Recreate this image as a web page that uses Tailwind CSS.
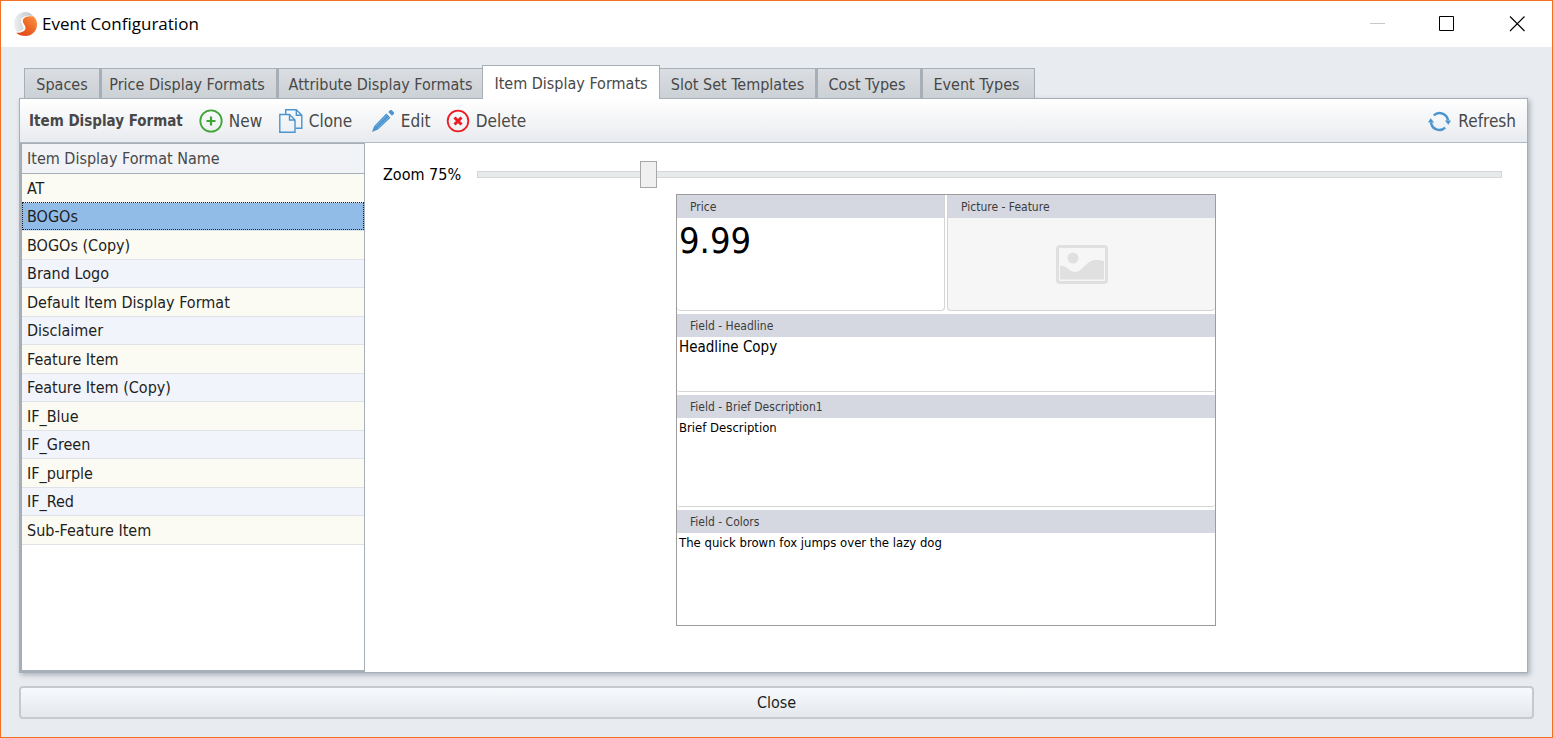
<!DOCTYPE html>
<html lang="en">
<head>
<meta charset="utf-8">
<title>Event Configuration</title>
<script src="https://cdn.jsdelivr.net/npm/@tailwindcss/browser@4"></script>
</head>
<body class="font-['DejaVu_Sans_Condensed','DejaVu_Sans',sans-serif] text-[16px] leading-5 text-[#1e1e1e]">
<div class="flex min-h-screen flex-col border border-[#f37021] bg-[#e8ebf0]">
  <header class="flex h-[46px] items-center bg-white pl-[12px]">
    <svg class="size-6" viewBox="0 0 24 24" aria-hidden="true">
      <defs>
        <linearGradient id="lg" x1="0" y1="0" x2="1" y2="0"><stop offset="0" stop-color="#eef0f1"/><stop offset="1" stop-color="#bfc3c6"/></linearGradient>
        <linearGradient id="lo" x1="0" y1="1" x2="1" y2="0"><stop offset="0" stop-color="#d9431e"/><stop offset=".5" stop-color="#ee6323"/><stop offset="1" stop-color="#fa9a4a"/></linearGradient>
      </defs>
      <path fill="url(#lg)" d="M12.500 0C6 0 1 5 1 11.500c0 3.500 1.300 6.500 3.200 8.500 3-.3 6.300-1.500 6.300-4 0-2.500-2.500-4-2.500-7 0-4 5-6 12-5C18 1.500 15.500 0 12.500 0z"/>
      <path fill="url(#lo)" d="M20.800 4.500c-5-.8-11 .5-11 4.300 0 3 2.700 4.200 2.700 7.200 0 3.300-4.300 5-9.300 4.700C5.500 22.800 8.800 24 12.500 24 19 24 24 18.800 24 12.200c0-2.900-1.200-5.700-3.200-7.700z"/>
    </svg>
    <h1 class="ml-[5px] font-['Open_Sans','Noto_Sans',sans-serif] text-[17px] leading-6 text-black">Event Configuration</h1>
    <div class="ml-auto flex h-full items-center">
      <button aria-label="Minimize" class="flex h-full w-[70px] items-center justify-center"><svg class="size-4" viewBox="0 0 16 16"><path d="M1 7.500h15" stroke="#c8c8c8"/></svg></button>
      <button aria-label="Maximize" class="flex h-full w-[70px] items-center justify-center"><svg class="size-4" viewBox="0 0 16 16"><path d="M.5.500h14v14h-14z" fill="none" stroke="#000"/></svg></button>
      <button aria-label="Close window" class="flex h-full w-[70px] items-center justify-center"><svg class="size-4" viewBox="0 0 16 16"><path d="M1 .500l14.500 14.500M15.500.500l-14.500 14.500" stroke="#000" stroke-width="1.100"/></svg></button>
    </div>
  </header>

  <main class="flex flex-1 flex-col px-[18px] pt-[18px] pb-[18px]">
    <nav role="tablist" class="relative z-10 -mb-px flex items-end pl-[5px] pr-1 text-[#484848] [&>button]:pt-[2px]">
      <button role="tab" class="h-[31px] w-[76px] border border-[#a6aeb7] bg-linear-to-b from-[#dadde1] to-[#ccd1d6]">Spaces</button>
      <button role="tab" class="h-[31px] w-[177px] border border-l-2 border-[#a6aeb7] bg-linear-to-b from-[#dadde1] to-[#ccd1d6] pr-1 whitespace-nowrap">Price Display Formats</button>
      <button role="tab" class="h-[31px] w-[205px] border border-l-2 border-r-0 border-[#a6aeb7] bg-linear-to-b from-[#dadde1] to-[#ccd1d6] whitespace-nowrap">Attribute Display Formats</button>
      <button role="tab" aria-selected="true" class="h-[34px] w-[178px] border border-b-0 border-[#a6aeb7] bg-white whitespace-nowrap">Item Display Formats</button>
      <button role="tab" class="h-[31px] w-[156px] border border-l-0 border-[#a6aeb7] bg-linear-to-b from-[#dadde1] to-[#ccd1d6] whitespace-nowrap">Slot Set Templates</button>
      <button role="tab" class="h-[31px] w-[105px] border border-l-2 border-[#a6aeb7] bg-linear-to-b from-[#dadde1] to-[#ccd1d6] pr-1 whitespace-nowrap">Cost Types</button>
      <button role="tab" class="h-[31px] w-[114px] border border-l-2 border-[#a6aeb7] bg-linear-to-b from-[#dadde1] to-[#ccd1d6] pr-1 whitespace-nowrap">Event Types</button>
    </nav>

    <section class="mr-[6px] flex flex-1 flex-col border border-[#a6aeb7] bg-white shadow-[2px_2px_5px_#a9b0ba]">
      <div class="flex h-[44px] items-center border-b border-[#b4bac2] bg-linear-to-b from-white to-[#e8ebef] pr-[11px] pl-[9px] text-[17px] text-[#484848]">
        <h2 class="mr-4 text-[15px] font-bold">Item Display Format</h2>
        <button class="mr-[14px] flex min-w-[66px] items-center gap-[6px]">
          <svg class="size-6" viewBox="0 0 24 24" fill="none" stroke="#3fa535"><circle cx="12" cy="12" r="10.700" stroke-width="1.800"/><path d="M12 7.500v9M7.500 12h9" stroke-width="2.200"/></svg>New</button>
        <button class="mr-[14px] flex min-w-[78px] items-center gap-[6px]">
          <svg class="size-6" viewBox="0 0 24 24" fill="none" stroke="#4a94cf" stroke-width="1.400"><path d="M6.700 5.500V.8h10.600l5.500 5.500v13H16.500M17.300.8v5.500h5.500"/><path d="M.8 5.500h9.700l5.500 5.500v12.200H.8zM10.500 5.500V11H16"/></svg>Clone</button>
        <button class="mr-[14px] flex min-w-[61px] items-center gap-[6px]">
          <svg class="size-6" viewBox="0 0 24 24"><path fill="#4a94cf" d="M15.300 4.500l4.200 4.200L7 20.500 1 23l2.200-6zM17.300 3l1.700-1.700c.6-.5 1.200-.5 1.800 0l2 2c.5.600.5 1.100 0 1.700l-1.800 1.800z"/><path d="M4.500 17.500L15.800 6.300M6.300 19.500L18 8" stroke="#8fbfe6" stroke-width=".7"/></svg>Edit</button>
        <button class="flex items-center gap-[6px]">
          <svg class="size-6" viewBox="0 0 24 24" fill="none" stroke="#ec1c24"><circle cx="12" cy="12" r="10.300" stroke-width="1.800"/><path d="M8.500 8.500l7 7M15.500 8.500l-7 7" stroke-width="3"/></svg>Delete</button>
        <button class="ml-auto flex items-center gap-[6px]">
          <svg class="size-6" viewBox="0 0 24 24" fill="none" stroke="#4a94cf" stroke-width="2.400"><path d="M5.800 6.300A8.500 8.500 0 0 1 20 11.500M17.200 18.700A8.500 8.500 0 0 1 3 13.500" /><path d="M16.800 11.500h6.200l-2.600 4.200zM0 13.500h6.200l-3.600-4.200z" fill="#4a94cf" stroke="none"/></svg>Refresh</button>
      </div>

      <div class="flex flex-1">
        <div class="w-[345px] shrink-0 border-t border-r border-b-2 border-l-2 border-[#a6aeb7]">
          <table class="w-full border-collapse text-left [&_td]:pt-[2px] [&_th]:pt-[2px]">
            <thead><tr class="h-[29px] border-b border-[#a6aeb7] bg-[#f1f3f7]"><th scope="col" class="pl-[5px] font-normal text-[#484848]">Item Display Format Name</th></tr></thead>
            <tbody class="[&>tr]:border-b [&>tr]:border-[#dfe2e6] [&>tr]:odd:h-[29px] [&>tr]:odd:bg-[#fbfbf3] [&>tr]:even:h-[28px] [&>tr]:even:bg-[#f1f4fa] [&_td]:pl-[5px]">
              <tr><td>AT</td></tr>
              <tr aria-selected="true"><td class="bg-[#91bce8] outline-1 -outline-offset-1 outline-dotted outline-[#222]">BOGOs</td></tr>
              <tr><td>BOGOs (Copy)</td></tr>
              <tr><td>Brand Logo</td></tr>
              <tr><td>Default Item Display Format</td></tr>
              <tr><td>Disclaimer</td></tr>
              <tr><td>Feature Item</td></tr>
              <tr><td>Feature Item (Copy)</td></tr>
              <tr><td>IF_Blue</td></tr>
              <tr><td>IF_Green</td></tr>
              <tr><td>IF_purple</td></tr>
              <tr><td>IF_Red</td></tr>
              <tr><td>Sub-Feature Item</td></tr>
            </tbody>
          </table>
        </div>

        <div class="flex-1 pt-[18px] pr-[25px] pl-[18px]">
          <div class="flex h-[27px] items-center text-black">
            <label for="zoom" class="w-[94px] shrink-0">Zoom 75%</label>
            <input id="zoom" type="range" min="50" max="205" value="75" class="h-[27px] min-w-0 flex-1 appearance-none bg-transparent [&::-webkit-slider-runnable-track]:h-[7px] [&::-webkit-slider-runnable-track]:border [&::-webkit-slider-runnable-track]:border-[#d6d8d8] [&::-webkit-slider-runnable-track]:bg-[#e7eaea] [&::-webkit-slider-thumb]:-mt-[11px] [&::-webkit-slider-thumb]:h-[27px] [&::-webkit-slider-thumb]:w-[17px] [&::-webkit-slider-thumb]:appearance-none [&::-webkit-slider-thumb]:border [&::-webkit-slider-thumb]:border-[#a8a8a8] [&::-webkit-slider-thumb]:bg-[#f0f0f0]">
          </div>

          <div class="-mr-[7px] mt-[6px] flex justify-center">
            <div class="flex w-[540px] flex-col gap-[3px] border border-[#9c9c9c] text-black [&_h3]:h-[23px] [&_h3]:bg-[#d5d8e1] [&_h3]:pl-[13px] [&_h3]:text-[12px] [&_h3]:leading-[24px] [&_h3]:text-[#3c3c3c]">
              <div class="grid grid-cols-2 gap-[2px]">
                <article class="h-[116px] overflow-hidden rounded-b-[4px] border-r border-b border-[#d4d4d4]"><h3>Price</h3><p class="pl-[2px] text-[36px] leading-[46px]">9.99</p></article>
                <article class="h-[116px] overflow-hidden rounded-b-[4px] border-b border-l border-[#d4d4d4] bg-[#f6f6f6]"><h3>Picture - Feature</h3>
                  <div class="flex justify-center pt-[27px]"><svg class="h-[39px] w-[52px]" viewBox="0 0 52 39"><rect x="1.500" y="1.500" width="49" height="36" rx="2.500" fill="none" stroke="#e0e0e0" stroke-width="3"/><circle cx="17" cy="13" r="5.500" fill="#e0e0e0"/><path d="M4 21c6-2 9 6 15 6 8 0 11-12 21-12 4 0 6 .5 8 1v18.500H4z" fill="#e0e0e0"/></svg></div></article>
              </div>
              <article class="h-[78px] rounded-[3px] border-b border-[#d4d4d4]"><h3>Field - Headline</h3><p class="pl-[2px] text-[15px]">Headline Copy</p></article>
              <article class="h-[112px] rounded-[3px] border-b border-[#d4d4d4]"><h3>Field - Brief Description1</h3><p class="pl-[2px] text-[13px]">Brief Description</p></article>
              <article class="h-[115px]"><h3>Field - Colors</h3><p class="pl-[2px] text-[13px]">The quick brown fox jumps over the lazy dog</p></article>
            </div>
          </div>
        </div>
      </div>
    </section>

    <button class="mt-[13px] h-[33px] rounded-[4px] border-2 border-[#c6cace] bg-linear-to-b from-[#f7fbfe] to-[#e4e8ec]">Close</button>
  </main>
</div>
</body>
</html>
